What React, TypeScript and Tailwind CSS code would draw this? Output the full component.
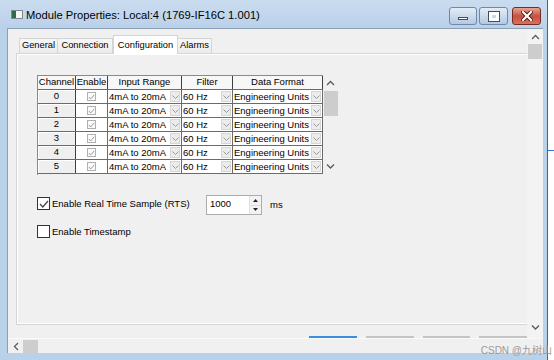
import React from "react";

const channels = [0, 1, 2, 3, 4, 5];

function Chevron({ dir, color = "#5a5a5a" }: { dir: "up" | "down" | "left"; color?: string }) {
  const d =
    dir === "up" ? "M1 5 L4.5 1.5 L8 5" : dir === "down" ? "M1 1.5 L4.5 5 L8 1.5" : "M5 1 L1.5 4.5 L5 8";
  const w = dir === "left" ? 6 : 9;
  const h = dir === "left" ? 9 : 6;
  return (
    <svg width={w} height={h} viewBox={`0 0 ${w} ${h}`}>
      <path d={d} fill="none" stroke={color} strokeWidth={1.3} />
    </svg>
  );
}

function DropCell({ text, w }: { text: string; w: string }) {
  return (
    <div className={`${w} h-full flex items-center justify-between bg-white border-r border-[#6b6b6b] pl-[1px]`}>
      <span className="leading-none">{text}</span>
      <span className="w-[10px] h-[11px] mr-[1px] bg-[#ececec] border border-[#d6d6d6] flex items-center justify-center">
        <svg width={7} height={4} viewBox="0 0 7 4">
          <path d="M0.5 0.5 L3.5 3.5 L6.5 0.5" fill="none" stroke="#9a9a9a" strokeWidth={1} />
        </svg>
      </span>
    </div>
  );
}

function TitleBar() {
  return (
    <div className="h-[28px] flex items-start bg-gradient-to-b from-[#cadcef] to-[#bad1ea]">
      <svg width={12} height={9} viewBox="0 0 12 9" className="ml-[11px] mt-[10px]">
        <rect x={0.5} y={0.5} width={11} height={8} fill="#f4f4f4" stroke="#7c8a96" />
        <rect x={1} y={1} width={4} height={7} fill="#2f6a4c" />
      </svg>
      <span className="ml-[3px] mt-[8px] text-[11.2px] leading-[14px] text-black">
        Module Properties: Local:4 (1769-IF16C 1.001)
      </span>
      <div className="ml-auto mr-[6px] mt-[7px] flex gap-[2px]">
        <div className="w-[28px] h-[18px] rounded-[3px] border border-[#6f8aa8] bg-gradient-to-b from-[#e3ecf6] to-[#b3c9e2] flex items-end justify-center pb-[4px]">
          <div className="w-[10px] h-[3px] bg-white border border-[#3d4e63]" />
        </div>
        <div className="w-[29px] h-[18px] rounded-[3px] border border-[#6f8aa8] bg-gradient-to-b from-[#e3ecf6] to-[#b3c9e2] flex items-center justify-center">
          <div className="w-[10px] h-[9px] border-[3px] border-t-[3px] border-white outline outline-1 outline-[#3d4e63]" />
        </div>
        <div className="ml-[2px] w-[29px] h-[18px] rounded-[3px] border border-[#7b2a22] bg-gradient-to-b from-[#e5a395] via-[#c8503f] to-[#d9705f] flex items-center justify-center">
          <svg width={12} height={10} viewBox="0 0 12 10">
            <path d="M2 1 L10 9 M10 1 L2 9" stroke="#4a1410" strokeWidth={4} strokeLinecap="square" />
            <path d="M2 1 L10 9 M10 1 L2 9" stroke="#ffffff" strokeWidth={2.2} strokeLinecap="square" />
          </svg>
        </div>
      </div>
    </div>
  );
}

function GridTable() {
  return (
    <div className="flex">
      <div className="w-[286px] border-l border-t border-[#8a8a8a] text-[9.5px]">
        <div className="flex h-[14px] bg-[#f7f7f7] border-b border-[#6b6b6b]">
          <div className="w-[38px] border-r border-[#404040] flex items-center justify-center">Channel</div>
          <div className="w-[32px] border-r border-[#404040] flex items-center justify-center">Enable</div>
          <div className="w-[74px] border-r border-[#404040] flex items-center justify-center">Input Range</div>
          <div className="w-[51px] border-r border-[#404040] flex items-center justify-center">Filter</div>
          <div className="w-[90px] border-r border-[#404040] flex items-center justify-center">Data Format</div>
        </div>
        {channels.map((c) => (
          <div key={c} className="flex h-[14px] border-b border-[#6b6b6b]">
            <div className="w-[38px] h-full bg-[#efefef] border-r border-[#404040] shadow-[inset_1px_1px_0_#ffffff] flex items-center justify-center">
              {c}
            </div>
            <div className="w-[32px] h-full bg-white border-r border-[#6b6b6b] flex items-center justify-center">
              <span className="w-[9px] h-[9px] border border-[#b0b0b0] bg-[#fbfbfb] flex items-center justify-center">
                <svg width={7} height={6} viewBox="0 0 7 6">
                  <path d="M0.8 3 L2.7 5 L6.3 0.8" fill="none" stroke="#9a9a9a" strokeWidth={1} />
                </svg>
              </span>
            </div>
            <DropCell text="4mA to 20mA" w="w-[74px]" />
            <DropCell text="60 Hz" w="w-[51px]" />
            <DropCell text="Engineering Units" w="w-[90px]" />
          </div>
        ))}
      </div>
      <div className="w-[15px] h-[100px] flex flex-col items-center">
        <div className="h-[16px] flex items-center justify-center">
          <Chevron dir="up" />
        </div>
        <div className="w-[14px] h-[25px] bg-[#cdcdcd]" />
        <div className="flex-1" />
        <div className="h-[16px] flex items-center justify-center pb-[3px]">
          <Chevron dir="down" />
        </div>
      </div>
    </div>
  );
}

function Check({ checked }: { checked?: boolean }) {
  return (
    <span className="w-[13px] h-[13px] border border-[#333333] bg-white flex items-center justify-center">
      {checked && (
        <svg width={10} height={8} viewBox="0 0 10 8">
          <path d="M1 4 L3.8 7 L9 1" fill="none" stroke="#444444" strokeWidth={1.2} />
        </svg>
      )}
    </span>
  );
}

export default function App() {
  return (
    <div className="relative w-[554px] h-[360px] overflow-hidden bg-white font-['Liberation_Sans',Arial,sans-serif] text-black">
      <div className="flex flex-col w-[548px] h-[360px] bg-[#bad1ea] border-r border-[#4f6379]">
        <TitleBar />
        <div className="ml-[7px] mr-[4px] h-[325px] flex flex-col border-l border-t border-[#8d9fb2] bg-[#f0f0f0]">
          <div className="flex h-[309px]">
            <div className="relative w-[519px] h-full overflow-hidden pl-[8px] pt-[6px]">
              <div className="relative z-10 flex items-end h-[18px] pl-[3px] text-[9.3px]">
                <div className="h-[15px] w-[39px] flex items-center justify-center border border-b-0 border-[#d5d5d5] bg-gradient-to-b from-[#f7f7f7] to-[#ebebeb]">
                  General
                </div>
                <div className="h-[15px] w-[55px] flex items-center justify-center border border-l-0 border-b-0 border-[#d5d5d5] bg-gradient-to-b from-[#f7f7f7] to-[#ebebeb]">
                  Connection
                </div>
                <div className="h-[19px] mb-[-1px] w-[65px] flex items-start pt-[3px] justify-center border border-b-0 border-[#d5d5d5] bg-white">
                  Configuration
                </div>
                <div className="h-[15px] w-[34px] flex items-center justify-center border border-l-0 border-b-0 border-[#d5d5d5] bg-gradient-to-b from-[#f7f7f7] to-[#ebebeb]">
                  Alarms
                </div>
              </div>
              <div className="w-[560px] h-[272px] border border-[#d5d5d5] shadow-[inset_1px_1px_0_#ffffff,inset_0_-1px_0_#ffffff] pl-[20px] pt-[21px]">
                <GridTable />
                <div className="mt-[20px] flex items-start">
                  <div className="w-[169px] mt-[2px] flex items-center">
                    <Check checked />
                    <span className="ml-[2px] text-[9.5px] leading-[13px]">Enable Real Time Sample (RTS)</span>
                  </div>
                  <div className="w-[56px] h-[20px] flex border border-[#abadb3] bg-white">
                    <span className="flex-1 pl-[3px] pt-[2px] text-[9.5px] leading-[12px]">1000</span>
                    <div className="w-[12px] flex flex-col border-l border-[#e0e0e0]">
                      <div className="flex-1 flex items-center justify-center bg-[#f3f3f3] border-b border-[#dcdcdc]">
                        <svg width={5} height={3} viewBox="0 0 5 3">
                          <path d="M0 3 L2.5 0 L5 3 Z" fill="#222" />
                        </svg>
                      </div>
                      <div className="flex-1 flex items-center justify-center bg-[#f3f3f3]">
                        <svg width={5} height={3} viewBox="0 0 5 3">
                          <path d="M0 0 L2.5 3 L5 0 Z" fill="#222" />
                        </svg>
                      </div>
                    </div>
                  </div>
                  <span className="ml-[8px] text-[9.5px] leading-[20px]">ms</span>
                </div>
                <div className="mt-[10px] flex items-center">
                  <Check />
                  <span className="ml-[2px] text-[9.5px] leading-[13px]">Enable Timestamp</span>
                </div>
              </div>
              <div className="ml-[293px] mt-[11px] flex gap-[9px]">
                <div className="w-[51px] h-[22px] border-t-2 border-[#3c8de0] bg-[#e5e5e5]" />
                <div className="w-[51px] h-[22px] border-t-2 border-[#c4c4c4] bg-[#e5e5e5]" />
                <div className="w-[51px] h-[22px] border-t-2 border-[#c4c4c4] bg-[#e5e5e5]" />
                <div className="w-[51px] h-[22px] border-t-2 border-[#c4c4c4] bg-[#e5e5e5]" />
              </div>
            </div>
            <div className="w-[16px] h-full flex flex-col items-center bg-[#f3f3f3]">
              <div className="h-[15px] flex items-center justify-center">
                <Chevron dir="up" />
              </div>
              <div className="w-[14px] h-[15px] bg-[#cdcdcd]" />
              <div className="flex-1" />
              <div className="h-[18px] flex items-center justify-center pb-[4px]">
                <Chevron dir="down" />
              </div>
            </div>
          </div>
          <div className="flex h-[15px] border-t border-[#fafafa]">
            <div className="w-[519px] flex items-center">
              <div className="w-[15px] flex items-center justify-center">
                <Chevron dir="left" />
              </div>
              <div className="w-[15px] h-[13px] bg-[#cdcdcd]" />
            </div>
            <div className="w-[16px] bg-[#f0f0f0]" />
          </div>
        </div>
      </div>
      <div className="absolute left-[548px] top-[150px] w-[6px] h-[1px] bg-[#3b6fd6]" />
      <span className="absolute right-[2px] bottom-[3px] text-[10px] leading-[12px] text-[#9a9a9a] font-['Liberation_Sans','Noto_Sans_CJK_SC',sans-serif]">
        CSDN @九树山
      </span>
    </div>
  );
}
